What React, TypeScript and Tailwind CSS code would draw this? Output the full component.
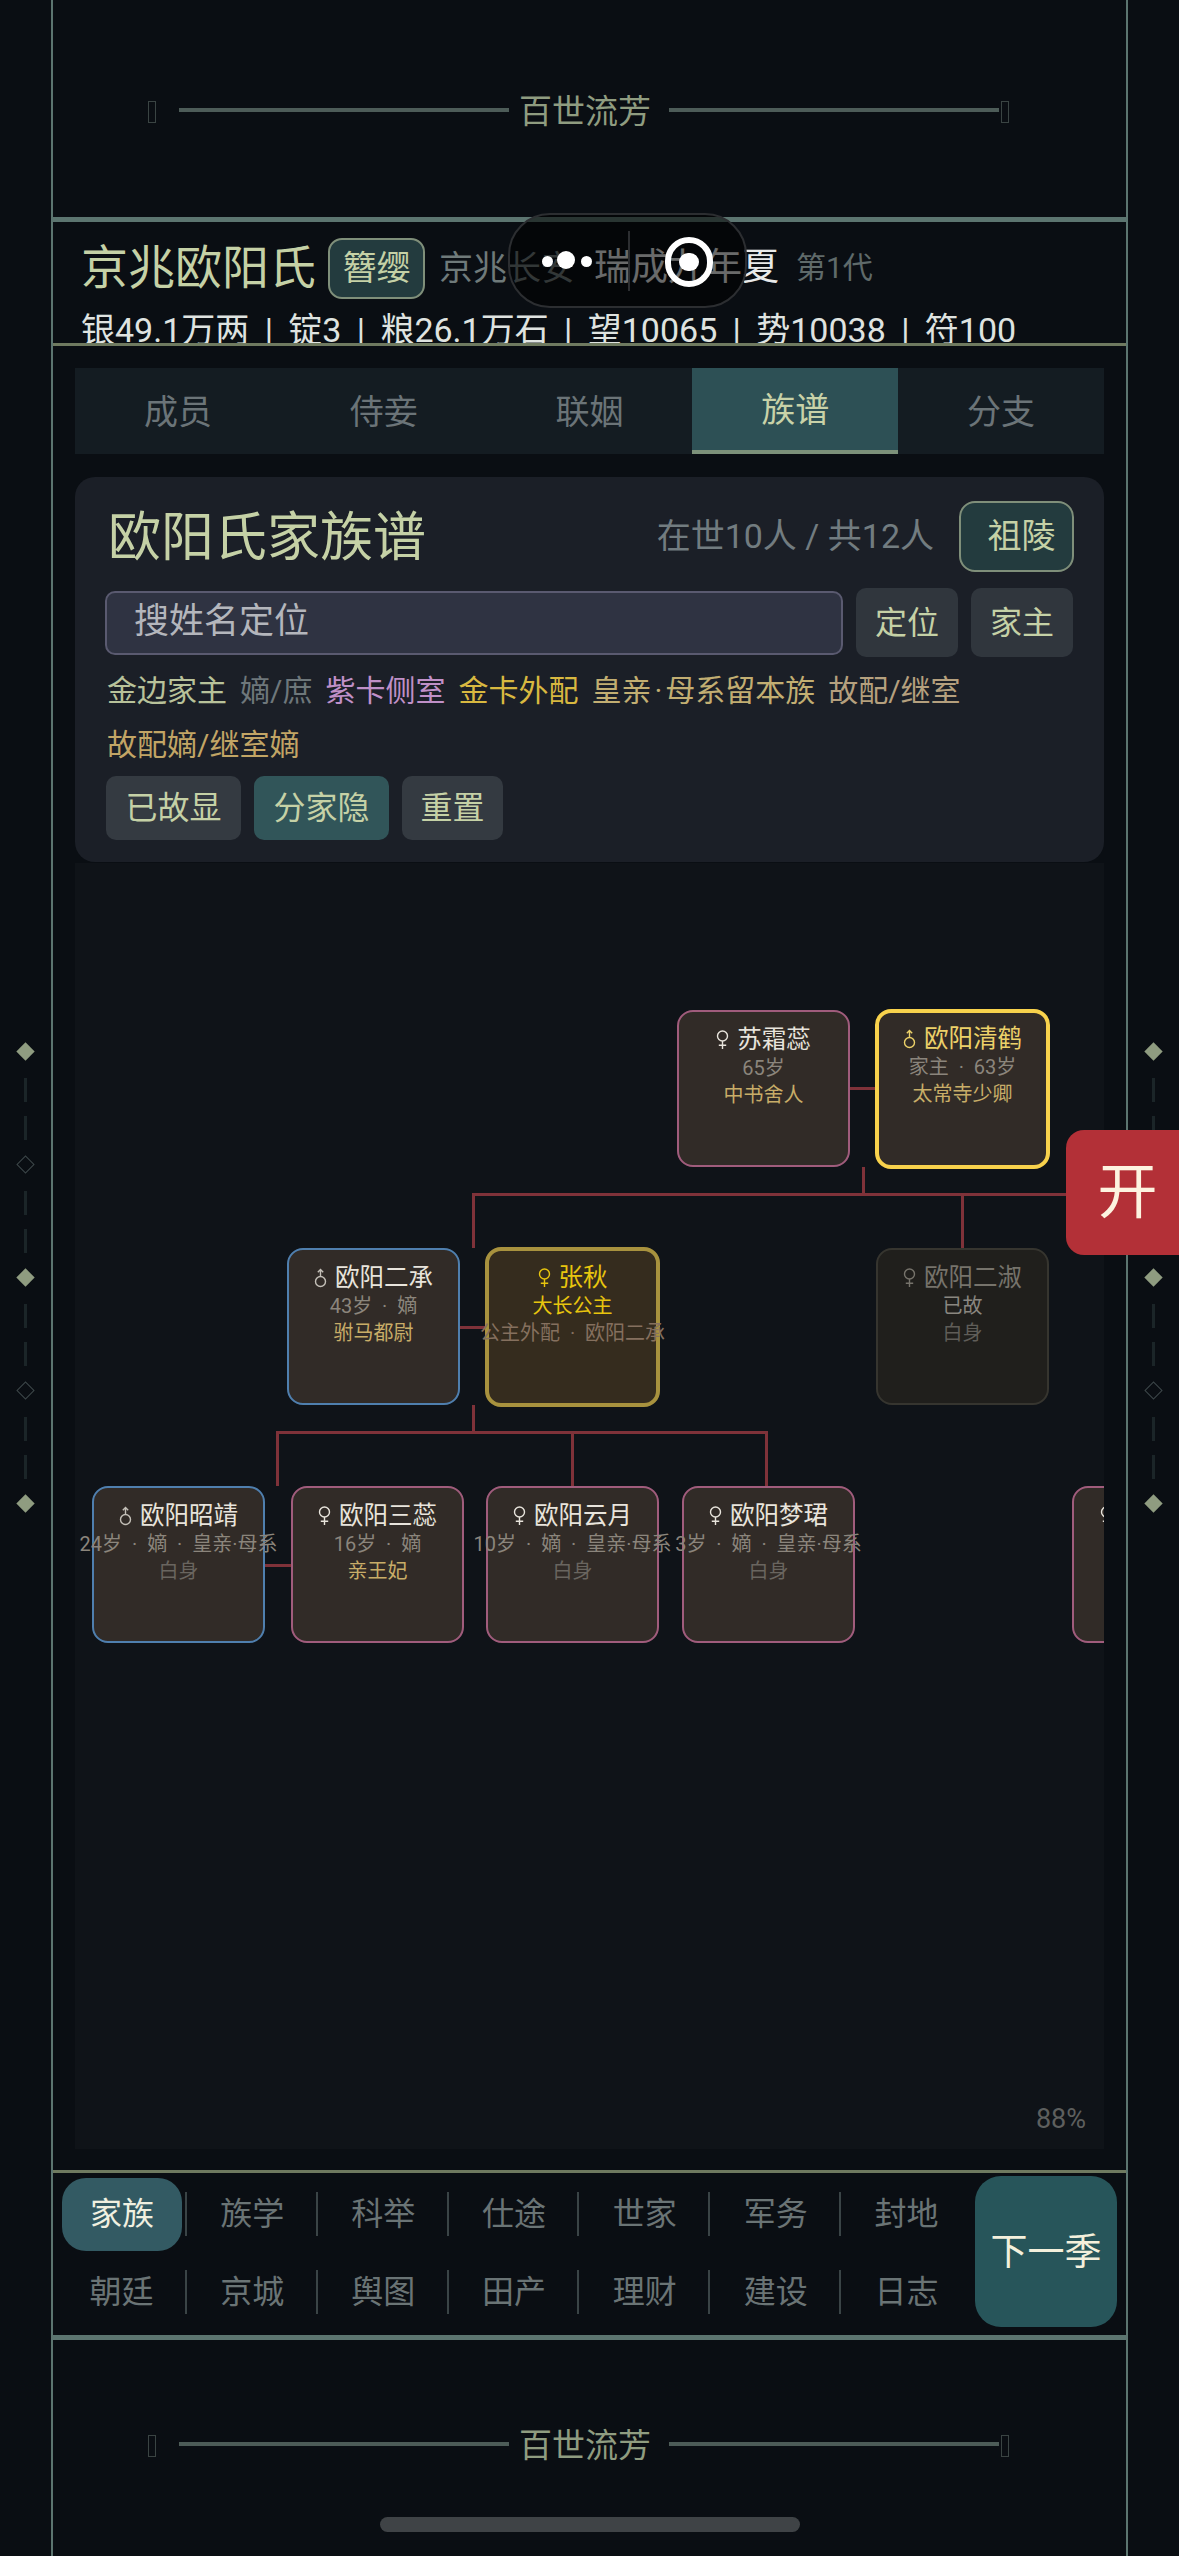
import { FC, ReactNode } from "react";

const FONT = "font-['Roboto','Noto_Sans_CJK_SC',sans-serif]";

const GenderIcon: FC<{ male?: boolean; color: string }> = ({ male, color }) => (
  <svg width="13" height="20" viewBox="0 0 13 20" fill="none" stroke={color} strokeWidth="1.4" className="shrink-0">
    {male ? (
      <>
        <circle cx="6.5" cy="13.5" r="5" />
        <path d="M6.5 8.5V1.5M3.8 4.2L6.5 1.5L9.2 4.2" />
      </>
    ) : (
      <>
        <circle cx="6.5" cy="6" r="5" />
        <path d="M6.5 11V19M2.8 15.2H10.2" />
      </>
    )}
  </svg>
);

interface Member {
  pos: string;
  name: string;
  male?: boolean;
  sub: string;
  role: string;
  kind: "blue" | "pink" | "head" | "gold" | "dead";
  roleColor?: string;
}

const members: Member[] = [
  { pos: "left-[602px] top-[147px]", name: "苏霜蕊", sub: "65岁", role: "中书舍人", kind: "pink", roleColor: "text-[#c8ad68]" },
  { pos: "left-[800px] top-[146px]", name: "欧阳清鹤", male: true, sub: "家主  ·  63岁", role: "太常寺少卿", kind: "head", roleColor: "text-[#c8ad68]" },
  { pos: "left-[801px] top-[385px]", name: "欧阳二淑", sub: "已故", role: "白身", kind: "dead", roleColor: "text-[#5f5d58]" },
  { pos: "left-[212px] top-[385px]", name: "欧阳二承", male: true, sub: "43岁  ·  嫡", role: "驸马都尉", kind: "blue", roleColor: "text-[#c8ad68]" },
  { pos: "left-[410px] top-[384px]", name: "张秋", sub: "大长公主", role: "公主外配  ·  欧阳二承", kind: "gold", roleColor: "text-[#85705e]" },
  { pos: "left-[17px] top-[623px]", name: "欧阳昭靖", male: true, sub: "24岁  ·  嫡  ·  皇亲·母系", role: "白身", kind: "blue", roleColor: "text-[#69655f]" },
  { pos: "left-[216px] top-[623px]", name: "欧阳三蕊", sub: "16岁  ·  嫡", role: "亲王妃", kind: "pink", roleColor: "text-[#c8ad68]" },
  { pos: "left-[411px] top-[623px]", name: "欧阳云月", sub: "10岁  ·  嫡  ·  皇亲·母系", role: "白身", kind: "pink", roleColor: "text-[#69655f]" },
  { pos: "left-[607px] top-[623px]", name: "欧阳梦珺", sub: "3岁  ·  嫡  ·  皇亲·母系", role: "白身", kind: "pink", roleColor: "text-[#69655f]" },
  { pos: "left-[997px] top-[623px]", name: "", sub: "", role: "", kind: "pink" },
];

const cardStyles = {
  blue: "w-[173px] h-[157px] border-2 border-[#4f7fae] bg-[#312b27] pt-[13px]",
  pink: "w-[173px] h-[157px] border-2 border-[#a05c7c] bg-[#312b27] pt-[13px]",
  head: "w-[175px] h-[160px] border-4 border-[#f8d24c] bg-[#312b27] pt-[11px]",
  gold: "w-[175px] h-[160px] border-4 border-[#a8923e] bg-[#352c1e] pt-[12px]",
  dead: "w-[173px] h-[157px] border-2 border-[#36352f] bg-[#201f1c] pt-[13px]",
};

const nameColors = {
  blue: { text: "text-[#e8e4dc]", icon: "#c4c0b8" },
  pink: { text: "text-[#e8e4dc]", icon: "#e8e4dc" },
  head: { text: "text-[#ecd169]", icon: "#ecd169" },
  gold: { text: "text-[#e8c50e]", icon: "#e8c50e" },
  dead: { text: "text-[#76736b]", icon: "#76736b" },
};

const subColors = {
  blue: "text-[#8b857c]",
  pink: "text-[#8b857c]",
  head: "text-[#8b857c]",
  gold: "text-[#e8c50e]",
  dead: "text-[#8a8780]",
};

const MemberCard: FC<{ m: Member }> = ({ m }) => (
  <div className={`absolute ${m.pos} ${cardStyles[m.kind]} rounded-[16px] flex flex-col items-center whitespace-pre`}>
    <div className={`flex items-center gap-[8px] h-[30px] text-[24.5px] leading-[30px] ${nameColors[m.kind].text}`}>
      <GenderIcon male={m.male} color={nameColors[m.kind].icon} />
      {m.name ? <span>{m.name}</span> : <span className="w-[96px]" />}
    </div>
    <div className={`h-[26px] text-[20px] leading-[26px] ${subColors[m.kind]}`}>{m.sub}</div>
    <div className={`h-[28px] text-[20px] leading-[28px] ${m.roleColor}`}>{m.role}</div>
  </div>
);

const links = [
  "left-[775px] top-[224px] w-[25px] h-[3px]",
  "left-[787px] top-[304px] w-[3px] h-[27px]",
  "left-[397px] top-[330px] w-[632px] h-[3px]",
  "left-[397px] top-[331px] w-[3px] h-[54px]",
  "left-[886px] top-[331px] w-[3px] h-[54px]",
  "left-[385px] top-[463px] w-[25px] h-[3px]",
  "left-[397px] top-[542px] w-[3px] h-[27px]",
  "left-[201px] top-[568px] w-[492px] h-[3px]",
  "left-[201px] top-[568px] w-[3px] h-[55px]",
  "left-[496px] top-[568px] w-[3px] h-[55px]",
  "left-[690px] top-[568px] w-[3px] h-[55px]",
  "left-[190px] top-[701px] w-[26px] h-[3px]",
];

const Dash = ({ first }: { first?: boolean }) => (
  <div className={`w-[3px] h-[24px] bg-[#1b2528] ${first ? "mt-[18px]" : "mt-[14px]"}`} />
);

const Diamond = ({ hollow, first }: { hollow?: boolean; first?: boolean }) => (
  <div className={`h-[18px] w-[18px] flex items-center justify-center ${first ? "" : "mt-[15px]"}`}>
    <div className={`w-[13px] h-[13px] rotate-45 ${hollow ? "border border-[#3d4749]" : "bg-[#8f9c80]"}`} />
  </div>
);

const SideDecor = () => (
  <div className="w-[51px] shrink-0 flex flex-col items-center pt-[1042px]">
    <Diamond first />
    <Dash first />
    <Dash />
    <Diamond hollow />
    <Dash first />
    <Dash />
    <Diamond />
    <Dash first />
    <Dash />
    <Diamond hollow />
    <Dash first />
    <Dash />
    <Diamond />
  </div>
);

const Band: FC<{ className: string }> = ({ className }) => (
  <div className={`flex items-center pl-[95px] shrink-0 ${className}`}>
    <span className="w-[8px] h-[22px] border border-[#3a4443] mt-[2px]" />
    <span className="w-[330px] h-[4px] bg-[#4d5c58] ml-[23px] -mt-[2px]" />
    <span className="w-[128px] text-[33px] leading-[40px] text-[#8f9c80] ml-[10px] mt-[2px] whitespace-nowrap">百世流芳</span>
    <span className="w-[330px] h-[4px] bg-[#4d5c58] ml-[22px] -mt-[2px]" />
    <span className="w-[8px] h-[22px] border border-[#3a4443] ml-[2px] mt-[2px]" />
  </div>
);

const Btn: FC<{ children: ReactNode; className: string }> = ({ children, className }) => (
  <button className={`rounded-[10px] text-[32px] text-[#c5d1a6] flex items-center justify-center ${className}`}>
    {children}
  </button>
);

const tabs = ["成员", "侍妾", "联姻", "族谱", "分支"];
const navRows = [
  ["家族", "族学", "科举", "仕途", "世家", "军务", "封地"],
  ["朝廷", "京城", "舆图", "田产", "理财", "建设", "日志"],
];
const stats = ["银49.1万两", "锭3", "粮26.1万石", "望10065", "势10038", "符100"];

export default function App() {
  return (
    <div className={`relative w-[1179px] h-[2556px] overflow-hidden flex bg-[#0a0e13] ${FONT}`}>
      <SideDecor />

      <div className="w-[1077px] shrink-0 border-x-2 border-[#5c7570] flex flex-col">
        <Band className="h-[217px] pt-[5px]" />
        <div className="h-[5px] bg-[#5c7570] shrink-0" />

        <div className="h-[121px] overflow-hidden pl-[28px] pt-[8px] shrink-0">
          <div className="flex items-center h-[76px] whitespace-nowrap">
            <span className="text-[47px] text-[#c5d1a6]">京兆欧阳氏</span>
            <span className="ml-[12px] w-[97px] h-[61px] rounded-[14px] border-2 border-[#7f8f7a] bg-[#233b3e] flex items-center justify-center text-[34px] text-[#c5d1a6]">
              簪缨
            </span>
            <span className="ml-[14px] text-[34px] text-[#6f7a7a]">京兆长安</span>
            <span className="ml-[19px] text-[37px] text-[#e8eaea]">瑞成九年夏</span>
            <span className="ml-[17px] text-[30px] text-[#5f6a6a] -mt-[2px]">第1代</span>
          </div>
          <div className="flex h-[46px] mt-[1px] text-[34px] leading-[46px] text-[#dfe3e0] whitespace-nowrap">
            {stats.map((s, i) => (
              <span key={s} className="flex">
                {i > 0 && <span className="w-[39px] text-center">|</span>}
                {s}
              </span>
            ))}
          </div>
        </div>
        <div className="h-[3px] bg-[#6f7a60] shrink-0" />

        <div className="px-[22px] pt-[22px] flex flex-col shrink-0">
          <div className="h-[86px] shrink-0 flex bg-[#141c22]">
            {tabs.map((t) => (
              <div
                key={t}
                className={`flex-1 flex items-center justify-center text-[34px] pt-[2px] ${
                  t === "族谱"
                    ? "bg-[#2d5055] text-[#c8d2a8] border-b-4 border-[#7c917a]"
                    : "text-[#6b7478]"
                }`}
              >
                {t}
              </div>
            ))}
          </div>

          <div className="mt-[23px] h-[385px] shrink-0 rounded-[20px] bg-[#1b1f27] px-[30px] pt-[24px]">
            <div className="flex items-center h-[71px]">
              <span className="text-[53px] text-[#c5d1a6] leading-[71px] ml-[3px] mt-[3px]">欧阳氏家族谱</span>
              <span className="ml-auto text-[34px] text-[#727c80]">在世10人 / 共12人</span>
              <Btn className="ml-[25px] w-[115px] h-[71px] !rounded-[16px] border-2 border-[#7f8f7a] bg-[#233b3e] pl-[10px] !text-[34px]">
                祖陵
              </Btn>
            </div>
            <div className="flex items-center mt-[16px] h-[69px]">
              <div className="w-[738px] h-[64px] rounded-[10px] border-2 border-[#5a5a70] bg-[#2f3342] flex items-center pl-[27px] text-[35px] text-[#b4b6bc]">
                搜姓名定位
              </div>
              <Btn className="ml-[13px] w-[102px] h-[69px] bg-[#30363d]">定位</Btn>
              <Btn className="ml-[13px] w-[102px] h-[69px] bg-[#30363d]">家主</Btn>
            </div>
            <div className="mt-[7px] flex flex-wrap gap-x-[13px] text-[30px] leading-[54px] w-[900px] ml-[2px]">
              <span className="text-[#b8c29a]">金边家主</span>
              <span className="text-[#6e777b]">嫡/庶</span>
              <span className="text-[#c090c8]">紫卡侧室</span>
              <span className="text-[#d8b840]">金卡外配</span>
              <span className="text-[#c2ae72]">
                皇亲<span className="mx-[3px]">·</span>母系留本族
              </span>
              <span className="text-[#b5a07e]">故配/继室</span>
              <span className="text-[#c2a565]">故配嫡/继室嫡</span>
            </div>
            <div className="flex gap-[13px] mt-[4px] ml-[1px]">
              <Btn className="w-[135px] h-[64px] bg-[#343a41]">已故显</Btn>
              <Btn className="w-[135px] h-[64px] bg-[#315559]">分家隐</Btn>
              <Btn className="w-[101px] h-[64px] bg-[#343a41]">重置</Btn>
            </div>
          </div>

          <div className="relative mt-[1px] h-[1286px] shrink-0 bg-[#0f1318] overflow-hidden">
            {links.map((l) => (
              <div key={l} className={`absolute bg-[#7f3239] ${l}`} />
            ))}
            {members.map((m) => (
              <MemberCard key={m.pos} m={m} />
            ))}
            <span className="absolute right-[18px] bottom-[15px] text-[27px] leading-[30px] text-[#5d5f5e]">88%</span>
          </div>
        </div>

        <div className="h-[3px] bg-[#6f7a60] shrink-0 mt-[21px]" />
        <div className="h-[162px] shrink-0 flex pl-[3px] pt-[2px]">
          <div className="w-[916px] grid grid-cols-7 grid-rows-2 h-[156px]">
            {navRows.flat().map((n, i) => (
              <div key={n} className="relative flex items-center justify-center text-[32px]">
                {i === 0 ? (
                  <span className="w-[120px] h-[73px] ml-[1px] rounded-[24px] bg-[#335a63] text-[#f0f0e0] flex items-center justify-center">
                    {n}
                  </span>
                ) : (
                  <span className="text-[#6a7475]">{n}</span>
                )}
                {i % 7 !== 6 && <span className="absolute right-0 top-[17px] w-[2px] h-[44px] bg-[#3a4446]" />}
              </div>
            ))}
          </div>
          <button className="ml-[3px] w-[142px] h-[151px] mt-[1px] pt-[3px] rounded-[26px] bg-[#27555a] text-[#f4f0dc] text-[37px]">
            下一季
          </button>
        </div>
        <div className="h-[5px] bg-[#5c7570] shrink-0" />
        <Band className="flex-1 pb-[6px]" />
      </div>

      <SideDecor />

      {/* dynamic island */}
      <div className="absolute left-[508px] top-[213px] w-[239px] h-[95px] rounded-[42px] border-2 border-[#2c2e31] bg-[#000000]/55">
        <span className="absolute left-[32px] top-[41px] w-[11px] h-[11px] rounded-full bg-white" />
        <span className="absolute left-[47px] top-[36px] w-[18px] h-[18px] rounded-full bg-white" />
        <span className="absolute left-[71px] top-[41px] w-[11px] h-[11px] rounded-full bg-white" />
        <span className="absolute left-[118px] top-[16px] w-[2px] h-[60px] bg-[#2c2e31]" />
        <span className="absolute left-[155px] top-[22px] w-[48px] h-[50px] rounded-full border-[6px] border-white flex items-center justify-center">
          <span className="w-[20px] h-[18px] rounded-full bg-white" />
        </span>
      </div>

      {/* red open button */}
      <div className="absolute right-0 top-[1130px] w-[113px] h-[125px] rounded-l-[18px] bg-[#b33037] text-[#fdf3e0] text-[60px] flex items-center justify-center pl-[10px]">
        开
      </div>

      {/* home indicator */}
      <div className="absolute left-[380px] top-[2517px] w-[420px] h-[15px] rounded-full bg-[#3f4346]" />
    </div>
  );
}
